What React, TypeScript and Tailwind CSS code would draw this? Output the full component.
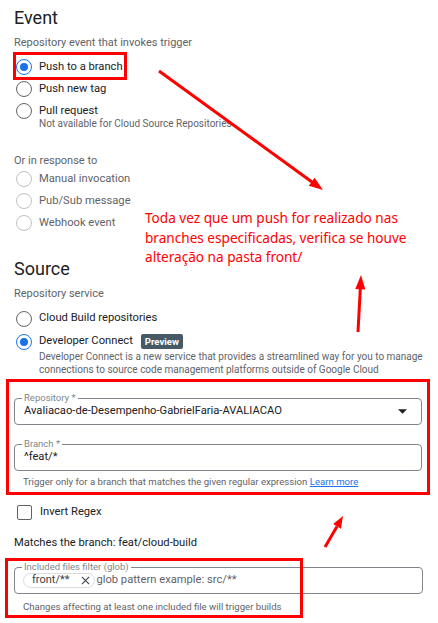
import type { ReactNode } from "react";

function Radio({ checked = false, disabled = false }: { checked?: boolean; disabled?: boolean }) {
  if (checked) {
    return (
      <span className="flex h-[16px] w-[16px] shrink-0 items-center justify-center rounded-full border-[1.5px] border-[#1a73e8]">
        <span className="h-[8px] w-[8px] rounded-full bg-[#1a73e8]" />
      </span>
    );
  }
  return (
    <span
      className={
        disabled
          ? "h-[16px] w-[16px] shrink-0 rounded-full border-[1.5px] border-[#bdc1c6]"
          : "h-[16px] w-[16px] shrink-0 rounded-full border-[1.5px] border-[#5f6368]"
      }
    />
  );
}

function RadioRow({
  label,
  checked,
  disabled,
  tall,
  children,
}: {
  label: string;
  checked?: boolean;
  disabled?: boolean;
  tall?: boolean;
  children?: ReactNode;
}) {
  return (
    <div className={tall ? "flex h-[23px] items-center gap-[7px] pl-[2px]" : "flex h-[22px] items-center gap-[7px] pl-[2px]"}>
      <Radio checked={checked} disabled={disabled} />
      <span className={disabled ? "text-[11.2px] text-[#5f6368]" : "text-[11.2px] text-[#202124]"}>{label}</span>
      {children}
    </div>
  );
}

function OutlinedField({ label, children }: { label: string; children: ReactNode }) {
  return (
    <div className="relative flex h-[27px] items-center rounded-[4px] border border-[#80868b] px-[9px]">
      <span className="absolute -top-[7px] left-[7px] bg-white px-[2px] text-[9.5px] leading-[12px] text-[#80868b]">
        {label}
      </span>
      {children}
    </div>
  );
}

export default function App() {
  return (
    <div
      className="relative h-[623px] w-[438px] overflow-hidden bg-white"
      style={{ fontFamily: "Roboto, 'Liberation Sans', sans-serif" }}
    >
      <div className="pl-[14px] pr-[15px]">
        {/* Event */}
        <h2 className="mt-[6px] h-[24px] text-[18px] leading-[24px] text-[#202124]">Event</h2>
        <p className="mt-[5px] h-[16px] text-[11px] leading-[16px] text-[#5f6368]">
          Repository event that invokes trigger
        </p>
        <div className="mt-[5px]">
          <RadioRow label="Push to a branch" checked />
          <RadioRow label="Push new tag" />
          <RadioRow label="Pull request" />
          <p className="-mt-[4px] h-[12px] pl-[25px] text-[10px] leading-[12px] text-[#5f6368]">
            Not available for Cloud Source Repositories
          </p>
        </div>

        <p className="mt-[23px] h-[16px] text-[11px] leading-[16px] text-[#5f6368]">Or in response to</p>
        <div className="-mt-[1px]">
          <RadioRow label="Manual invocation" disabled />
          <RadioRow label="Pub/Sub message" disabled />
          <RadioRow label="Webhook event" disabled />
        </div>

        {/* Source */}
        <h2 className="mt-[23px] h-[24px] text-[18px] leading-[24px] text-[#202124]">Source</h2>
        <p className="mt-[5px] h-[16px] text-[11px] leading-[16px] text-[#5f6368]">Repository service</p>
        <div className="mt-[5px]">
          <RadioRow label="Cloud Build repositories" tall />
          <RadioRow label="Developer Connect" checked tall>
            <span className="ml-[1px] rounded-[2px] bg-[#455a64] px-[4px] text-[9.5px] font-bold leading-[15px] text-white">
              Preview
            </span>
          </RadioRow>
          <p className="-mt-[3px] whitespace-nowrap pl-[25px] text-[10px] leading-[13px] text-[#5f6368]">
            Developer Connect is a new service that provides a streamlined way for you to manage
            <br />
            connections to source code management platforms outside of Google Cloud
          </p>
        </div>

        <div className="-ml-[8px] mt-[3px] w-[424px] border-[3px] border-[#ff0000] px-[5px] pb-[3px] pt-[16px]">
          <OutlinedField label="Repository *">
            <span className="flex-1 text-[11.2px] text-[#202124]">Avaliacao-de-Desempenho-GabrielFaria-AVALIACAO</span>
            <svg width="9" height="5" viewBox="0 0 10 5" className="mr-[5px]">
              <path d="M0 0 L10 0 L5 5 Z" fill="#202124" />
            </svg>
          </OutlinedField>
          <div className="mt-[19px]">
            <OutlinedField label="Branch *">
              <span className="text-[11.2px] text-[#202124]">^feat/*</span>
            </OutlinedField>
          </div>
          <p className="mt-[4px] h-[14px] pl-[9px] text-[9.6px] leading-[14px] text-[#5f6368]">
            Trigger only for a branch that matches the given regular expression{" "}
            <span className="text-[#1a73e8] underline">Learn more</span>
          </p>
        </div>

        <div className="mt-[6px] flex h-[22px] items-center gap-[8px] pl-[3px]">
          <span className="h-[15px] w-[15px] rounded-[2px] border-[1.5px] border-[#5f6368]" />
          <span className="text-[11.2px] text-[#202124]">Invert Regex</span>
        </div>

        <p className="mt-[12px] h-[16px] text-[11.2px] leading-[16px] text-[#202124]">
          Matches the branch: feat/cloud-build
        </p>

        <div className="mt-[16px]">
          <OutlinedField label="Included files filter (glob)">
            <span className="-ml-[1px] flex h-[15px] items-center gap-[12px] rounded-full border border-[#dadce0] pl-[8px] pr-[4px] text-[11px] text-[#3c4043]">
              front/**
              <svg width="9" height="9" viewBox="0 0 10 10">
                <path d="M1 1 L9 9 M9 1 L1 9" stroke="#3c4043" strokeWidth="1.2" />
              </svg>
            </span>
            <span className="ml-[1px] text-[11.2px] text-[#5f6368]">glob pattern example: src/**</span>
          </OutlinedField>
          <p className="mt-[6px] h-[14px] pl-[9px] text-[9.6px] leading-[14px] text-[#5f6368]">
            Changes affecting at least one included file will trigger builds
          </p>
        </div>
      </div>

      {/* annotations */}
      <div className="absolute left-[13px] top-[52px] h-[28px] w-[114px] border-[3px] border-[#ff0000]" />
      <div className="absolute left-[5px] top-[558px] h-[60px] w-[298px] border-[3px] border-[#ff0000]" />

      <p
        className="absolute left-[145px] top-[208px] text-[13.6px] leading-[19.5px] text-[#ff0000]"
        style={{ fontFamily: "'Noto Sans', 'Open Sans', sans-serif" }}
      >
        Toda vez que um push for realizado nas
        <br />
        branches especificadas, verifica se houve
        <br />
        alteração na pasta front/
      </p>

      <svg className="pointer-events-none absolute left-0 top-0" width="438" height="623">
        <line x1="159" y1="71" x2="312" y2="182" stroke="#ff0000" strokeWidth="3" />
        <polygon points="323,190 308.8,185.8 314.6,177.8" fill="#ff0000" />
        <line x1="358" y1="332" x2="360.3" y2="289" stroke="#ff0000" strokeWidth="3" />
        <polygon points="361,275 355.3,289 365.3,289.5" fill="#ff0000" />
        <line x1="325" y1="547" x2="337" y2="526.4" stroke="#ff0000" strokeWidth="3" />
        <polygon points="343,516 333.1,524.1 340.9,528.7" fill="#ff0000" />
      </svg>
    </div>
  );
}
